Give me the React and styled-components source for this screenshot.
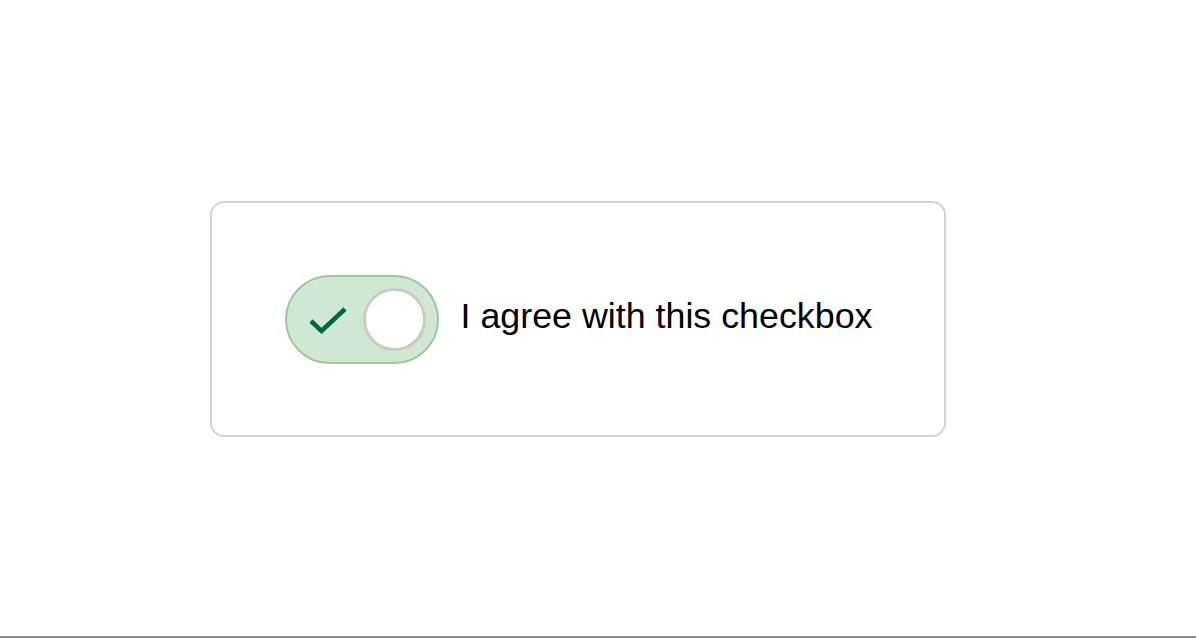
import React, { useState } from "react";
import styled, { createGlobalStyle } from "styled-components";

const Global = createGlobalStyle`
  html, body { margin: 0; padding: 0; background: #fff; }
  body { font-family: "Liberation Sans", Arial, sans-serif; }
`;

const Page = styled.div`
  width: 1196px;
  height: 638px;
  box-sizing: border-box;
  border-bottom: 2px solid #8a8a8a;
  display: flex;
  align-items: flex-start;
  padding-top: 201px;
  padding-left: 210px;
`;

const Card = styled.div`
  width: 736px;
  height: 236px;
  box-sizing: border-box;
  border: 2px solid #d4d4d4;
  border-radius: 14px;
  display: flex;
  align-items: center;
  justify-content: center;
  padding-left: 1px;
`;

const Label = styled.label`
  display: flex;
  align-items: center;
  gap: 22px;
  cursor: pointer;
`;

const Track = styled.button`
  width: 154px;
  height: 89px;
  box-sizing: border-box;
  border-radius: 45px;
  border: 2.5px solid ${(p) => (p.$on ? "#a3c2a6" : "#bbbbbb")};
  background: ${(p) => (p.$on ? "#cfe8d4" : "#eeeeee")};
  display: flex;
  align-items: center;
  justify-content: space-between;
  padding: 0 11px 0 22px;
  cursor: pointer;
`;

const Knob = styled.span`
  width: 63px;
  height: 63px;
  box-sizing: border-box;
  border-radius: 50%;
  background: #fff;
  border: 3px solid #c9cbc9;
  display: block;
`;

const Text = styled.span`
  font-family: "Liberation Sans", Arial, sans-serif;
  font-size: 35.8px;
  color: #000;
  line-height: 1;
  padding-bottom: 4px;
`;

function Check() {
  return (
    <svg width="38" height="30" viewBox="0 0 38 30">
      <path d="M2 17 L12.5 27 L36 5" fill="none" stroke="#02673a" strokeWidth="4.5" />
    </svg>
  );
}

export default function App() {
  const [on, setOn] = useState(true);
  return (
    <>
      <Global />
      <Page>
        <Card>
          <Label>
            <Track $on={on} role="switch" aria-checked={on} onClick={() => setOn(!on)}>
              <Check />
              <Knob />
            </Track>
            <Text>I agree with this checkbox</Text>
          </Label>
        </Card>
      </Page>
    </>
  );
}
